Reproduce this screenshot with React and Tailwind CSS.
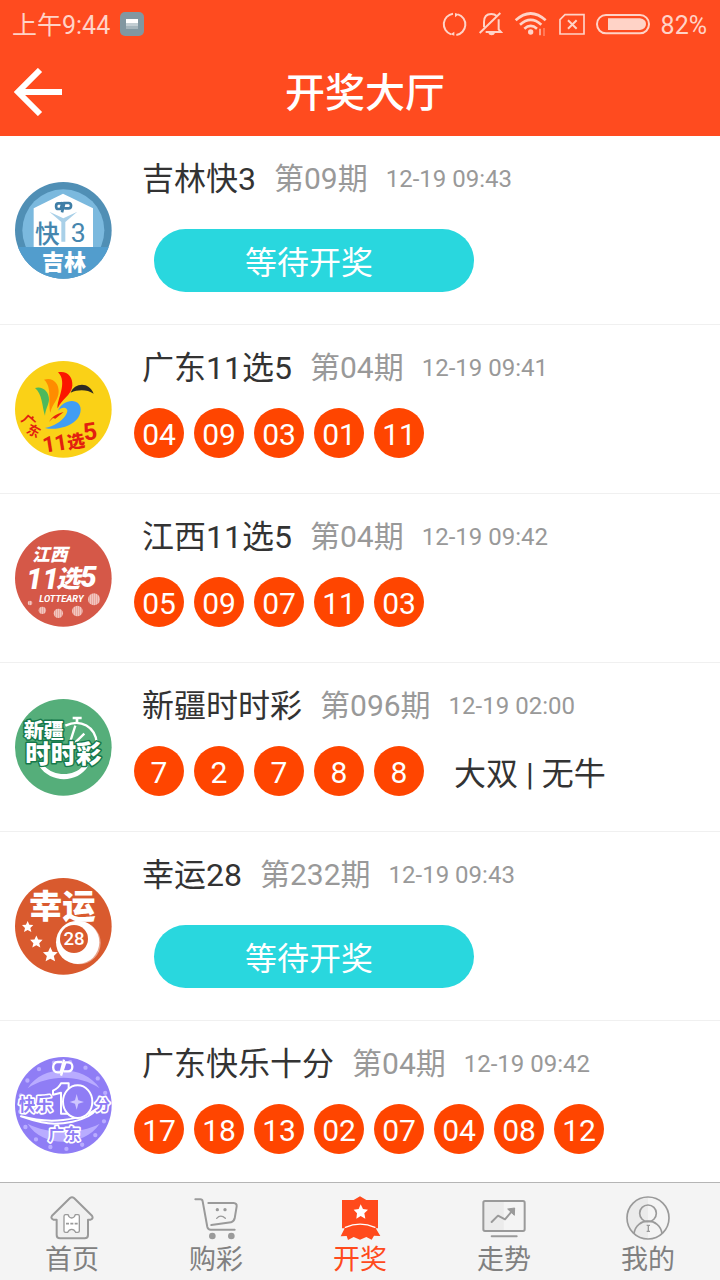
import React from "react";

const draws = [
  { id: "jlk3", name: "吉林快3", issue: "第09期", time: "12-19 09:43", Logo: JilinLogo },
  {
    id: "gd11x5",
    name: "广东11选5",
    issue: "第04期",
    time: "12-19 09:41",
    balls: ["04", "09", "03", "01", "11"],
    Logo: GuangdongLogo,
  },
  {
    id: "jx11x5",
    name: "江西11选5",
    issue: "第04期",
    time: "12-19 09:42",
    balls: ["05", "09", "07", "11", "03"],
    Logo: JiangxiLogo,
  },
  {
    id: "xjssc",
    name: "新疆时时彩",
    issue: "第096期",
    time: "12-19 02:00",
    balls: ["7", "2", "7", "8", "8"],
    note: "大双 | 无牛",
    Logo: XinjiangLogo,
  },
  { id: "xy28", name: "幸运28", issue: "第232期", time: "12-19 09:43", Logo: LuckyLogo },
  {
    id: "gdklsf",
    name: "广东快乐十分",
    issue: "第04期",
    time: "12-19 09:42",
    balls: ["17", "18", "13", "02", "07", "04", "08", "12"],
    Logo: HappyTenLogo,
  },
];

const tabs = [
  { label: "首页", Icon: HomeIcon },
  { label: "购彩", Icon: CartIcon },
  { label: "开奖", Icon: PrizeIcon, active: true },
  { label: "走势", Icon: TrendIcon },
  { label: "我的", Icon: UserIcon },
];

/* lottery logos */

function JilinLogo() {
  return (
    <svg viewBox="46 33 291 291" className="size-full" aria-hidden="true">
      <clipPath id="jilin-clip">
        <circle cx="191" cy="178" r="145" />
      </clipPath>
      <g clipPath="url(#jilin-clip)">
        <rect x="46" y="33" width="291" height="291" fill="#508fb5" />
        <circle cx="191" cy="178" r="123" fill="#7bb9de" />
        <path d="M190 68 280 112V228H102V112Z" fill="#fff" />
        <path d="M149 122 191 142 233 122 197 153V212H185V153Z" fill="#a9d0e8" />
        <rect x="46" y="228" width="291" height="96" fill="#529dcd" />
      </g>
      <g fill="none" stroke="#3f7ea6" strokeWidth="8">
        <path d="M186 97H176C167 97 167 114 176 114H183L189 93" />
        <path d="M187 124 194 96H207C217 96 216 112 207 112H194" />
      </g>
      <text x="143" y="216" fontSize="74" fontWeight="500" textAnchor="middle" fill="#4686ae">快</text>
      <text x="236" y="213" fontSize="80" textAnchor="middle" fill="#4686ae">3</text>
      <text x="193" y="298" fontSize="66" fontWeight="900" textAnchor="middle" fill="#fff">吉林</text>
    </svg>
  );
}

function GuangdongLogo() {
  return (
    <svg viewBox="46 32 291 291" className="size-full" aria-hidden="true">
      <circle cx="191" cy="177" r="145" fill="#fad117" />
      <path d="M106 113C128 106 149 124 148 148C147 164 137 176 136 196C127 168 128 130 106 113Z" fill="#4cb95c" />
      <path d="M133 88C158 79 178 98 177 124C176 149 158 160 152 187C145 156 158 108 133 88Z" fill="#ff8c00" />
      <path d="M175 66C203 60 220 80 218 106C216 134 184 147 174 174C170 150 206 96 175 66Z" fill="#fb1600" />
      <path d="M213 127C224 97 268 92 282 130C262 117 236 117 213 127Z" fill="#2e2a24" />
      <path
        d="M175 181C184 158 210 147 228 154C249 162 247 191 229 210C206 233 163 240 136 233C162 227 184 215 197 196C205 184 205 177 197 173C190 170 182 174 175 181Z"
        fill="#419df3"
      />
      <path d="M148 214C158 199 171 190 192 185L167 205L160 203Z" fill="#e6220c" />
      <g fill="#e2200f" fontWeight="700" textAnchor="middle">
        <text transform="translate(77 223) rotate(42)" fontSize="40">广</text>
        <text transform="translate(95 254) rotate(28)" fontSize="40">东</text>
        <text transform="translate(151 304) rotate(-9)" fontSize="66">1</text>
        <text transform="translate(187 299) rotate(-9)" fontSize="66">1</text>
        <text transform="translate(232 292) rotate(-9)" fontSize="53" fontWeight="900">选</text>
        <text transform="translate(275 268) rotate(-9)" fontSize="72">5</text>
      </g>
    </svg>
  );
}

function JiangxiLogo() {
  return (
    <svg viewBox="46 27 291 291" className="size-full" aria-hidden="true">
      <defs>
        <pattern id="jiangxi-stripes" width="6" height="6" patternUnits="userSpaceOnUse">
          <rect width="6" height="6" fill="#d55848" />
          <rect width="4" height="6" fill="#fbe6e2" />
        </pattern>
      </defs>
      <circle cx="191" cy="172" r="145" fill="#d55848" />
      <g fill="#fff" fontWeight="900" fontStyle="italic">
        <text x="97" y="119" fontSize="53">江西</text>
        <text x="80" y="204" fontSize="86">11</text>
        <text x="170" y="197" fontSize="72">选</text>
        <text x="242" y="197" fontSize="88">5</text>
        <text x="119" y="243" fontSize="28" fontWeight="700">LOTTEARY</text>
      </g>
      <g fill="url(#jiangxi-stripes)">
        <circle cx="91" cy="246" r="7" />
        <circle cx="128" cy="268" r="11" />
        <circle cx="176" cy="277" r="14" />
        <circle cx="233" cy="270" r="16" />
        <circle cx="283" cy="235" r="18" />
      </g>
    </svg>
  );
}

function XinjiangLogo() {
  return (
    <svg viewBox="46 27 291 291" className="size-full" aria-hidden="true">
      <circle cx="191" cy="172" r="145" fill="#55ae7a" />
      <g fill="none" stroke="#fff">
        <path d="M197 107C244 84 287 112 291 158" strokeWidth="7" />
        <path d="M219 84H246M232 84V98" strokeWidth="8" />
        <path d="M227 107 211 157M254 131 224 160" strokeWidth="7" />
      </g>
      <path d="M119 229H135C161 259 222 261 249 229H265C234 280 153 281 119 229Z" fill="#fff" />
      <g
        fill="#fff"
        stroke="#15784b"
        strokeWidth="9"
        strokeLinejoin="round"
        paintOrder="stroke"
        fontWeight="900"
        textAnchor="middle"
      >
        <text x="191" y="219" fontSize="76">时时彩</text>
        <text x="132" y="145" fontSize="60">新疆</text>
      </g>
    </svg>
  );
}

function LuckyLogo() {
  const star = "M0-17 5-6 17-5 8 4 11 16 0 10-11 16-8 4-17-5-5-6Z";
  return (
    <svg viewBox="46 39 291 291" className="size-full" aria-hidden="true">
      <circle cx="191" cy="184" r="145" fill="#d95a2e" />
      <circle cx="239" cy="234" r="64" fill="#e9a58d" />
      <circle cx="234" cy="232" r="65" fill="#fff" />
      <circle cx="223" cy="222" r="42" fill="#d95a2e" />
      <g fill="#fff">
        <path d={star} transform="translate(84 185)" />
        <path d={star} transform="translate(110 230) scale(1.1)" />
        <path d={star} transform="translate(152 268) scale(1.3)" />
      </g>
      <g fill="#fff" textAnchor="middle">
        <text x="188" y="158" fontSize="100" fontWeight="900">幸运</text>
        <text x="223" y="241" fontSize="56" fontWeight="500">28</text>
      </g>
    </svg>
  );
}

function HappyTenLogo() {
  return (
    <svg viewBox="46 38 291 291" className="size-full" aria-hidden="true">
      <circle cx="191" cy="183" r="145" fill="#8f7df5" />
      <circle cx="191" cy="183" r="131" fill="none" stroke="#b9acff" strokeWidth="13" strokeLinecap="round" strokeDasharray="0 49" />
      <path d="M84 132C128 60 252 60 300 132C238 90 146 90 84 132Z" fill="#b9acff" />
      <path d="M84 238C128 310 252 310 300 238C238 270 146 270 84 238Z" fill="#b9acff" />
      <g fill="none" stroke="#fff" strokeWidth="7">
        <path d="M187 53H174C156 53 156 84 174 84H183L193 46" />
        <path d="M184 94 197 54H206C222 54 222 81 206 81H192" />
      </g>
      <g fill="#8f7df5" stroke="#fff" strokeWidth="6" strokeLinejoin="round">
        <path d="M64 216C150 240 240 229 291 194C266 231 178 245 126 234C98 228 78 221 64 216Z" />
        <path d="M160 139C173 133 180 125 184 117H207V208H184V145L160 151Z" />
        <ellipse cx="234" cy="172" rx="44" ry="49" />
      </g>
      <path d="M231 149 236 168 253 173 236 178 231 196 226 178 210 173 226 168Z" fill="#cfc6ff" />
      <g
        fill="#8f7df5"
        stroke="#fff"
        strokeWidth="10"
        strokeLinejoin="round"
        paintOrder="stroke"
        fontWeight="700"
        textAnchor="middle"
      >
        <text x="82" y="200" fontSize="50">快</text>
        <text x="132" y="200" fontSize="54">乐</text>
        <text x="308" y="198" fontSize="46">分</text>
        <text x="194" y="286" fontSize="48">广东</text>
      </g>
    </svg>
  );
}

/* bottom tab icons */

function HomeIcon() {
  return (
    <svg viewBox="150 63 132 132" className="size-11" aria-hidden="true">
      <path
        d="M210 69Q216 65 222 69L276 122Q281 131 272 134H264V180Q264 190 254 190H180Q170 190 170 180V134H160Q151 130 156 122Z"
        fill="#f0f0f0"
        stroke="#9a9a9a"
        strokeWidth="6"
        strokeLinejoin="round"
      />
      <path
        d="M194 119H204Q207 129 215 129Q223 129 226 119H234Q238 119 238 124V168Q238 172 233 172H227Q223 163 215 163Q207 163 203 172H197Q192 172 192 168V124Q192 119 197 119Z"
        fill="#fff"
        stroke="#9a9a9a"
        strokeWidth="4"
      />
      <path d="M198 146H234" stroke="#9a9a9a" strokeWidth="5" strokeDasharray="9 4" />
    </svg>
  );
}

function CartIcon() {
  return (
    <svg viewBox="582 63 132 132" className="size-11" aria-hidden="true">
      <g fill="none" stroke="#9a9a9a" strokeWidth="6" strokeLinecap="round" strokeLinejoin="round">
        <path d="M586 73H601Q607 73 608 79L622 156Q624 164 632 164H704" />
        <path d="M625 84H701Q711 85 710 94L704 130Q702 139 693 142L634 150" />
        <path d="M650 130Q662 117 676 130" strokeWidth="4" />
      </g>
      <g fill="#9a9a9a">
        <circle cx="652" cy="104" r="5" />
        <circle cx="675" cy="104" r="5" />
        <circle cx="637" cy="183" r="10" />
        <circle cx="694" cy="183" r="10" />
      </g>
    </svg>
  );
}

function PrizeIcon() {
  return (
    <svg viewBox="54 63 132 132" className="size-11" aria-hidden="true">
      <path d="M66 75H101L120 64 139 75H174V160H66Z" fill="#ff4a1c" />
      <path d="M76 156Q120 138 165 156L181 183 162 182 155 194 139 186 120 194 101 186 84 195 80 183 62 184Z" fill="#ff4a1c" />
      <path d="M76 157Q120 138 165 157" fill="none" stroke="#fff" strokeWidth="4" strokeLinecap="round" />
      <path d="M122 88 129 102 144 104 133 115 136 131 122 123 109 131 111 115 101 104 116 102Z" fill="#fff" />
    </svg>
  );
}

function TrendIcon() {
  return (
    <svg viewBox="486 63 132 132" className="size-11" aria-hidden="true">
      <path d="M490 78H551V168H490Z" fill="#ebebeb" />
      <g fill="none" stroke="#9a9a9a" strokeWidth="6" strokeLinecap="round" strokeLinejoin="round">
        <rect x="490" y="78" width="124" height="90" rx="5" />
        <path d="M515 184H590" />
        <path d="M515 141 534 122 555 133 578 106" />
      </g>
      <path d="M563 102 584 99 583 121Z" fill="#9a9a9a" stroke="#9a9a9a" strokeWidth="3" />
    </svg>
  );
}

function UserIcon() {
  return (
    <svg viewBox="918 63 132 132" className="size-11" aria-hidden="true">
      <path d="M984 66A63 63 0 0 0 984 192Z" fill="#ebebeb" />
      <g fill="none" stroke="#9a9a9a" strokeWidth="5">
        <circle cx="984" cy="129" r="63" />
        <circle cx="984" cy="115" r="25" />
        <path d="M942 176C948 126 1020 126 1026 176" />
        <path d="M980 151H990M985 151V170M980 169H990" strokeWidth="4" />
      </g>
    </svg>
  );
}

function StatusBar() {
  return (
    <div className="flex h-12 items-center justify-between pl-3 pr-[13px] text-[25px] text-[#ffd3c7]">
      <div className="flex items-center gap-2.5">
        <span className="pt-1">上午9:44</span>
        <svg viewBox="0 0 24 24" className="size-6" aria-hidden="true">
          <rect width="24" height="24" rx="5" fill="#8197a1" />
          <rect x="6" y="7" width="12" height="4" fill="#fff" />
          <rect x="6" y="11" width="12" height="3" fill="#c3ced3" />
          <rect x="6" y="14" width="12" height="3" fill="#a6b6bd" />
        </svg>
      </div>
      <div className="flex items-center gap-[11px]">
        <svg viewBox="39 36 75 75" className="size-[25px]" fill="none" stroke="currentColor" strokeWidth="6" aria-hidden="true">
          <path d="M72 41A32 32 0 0 0 66 103M82 105A32 32 0 0 0 87 43" />
          <path d="M78 39V52L90 43ZM76 107V95L64 103Z" fill="currentColor" stroke="none" />
        </svg>
        <svg viewBox="147 36 75 75" className="size-[25px]" fill="none" stroke="currentColor" strokeWidth="6" aria-hidden="true">
          <path d="M165 82V66C165 50 174 42 187 42C194 42 199 44 203 48M209 58V88L216 96H170" />
          <path d="M152 99 214 39" />
          <path d="M178 99H198Q196 106 188 106Q180 106 178 99Z" fill="currentColor" stroke="none" />
        </svg>
        <svg viewBox="255 36 102 75" className="h-[25px] w-[34px]" fill="none" stroke="currentColor" strokeWidth="8" aria-hidden="true">
          <path d="M260 61Q305 20 350 61M273 74Q305 45 337 74M286 86Q305 69 324 86" />
          <circle cx="305" cy="96" r="8" fill="currentColor" stroke="none" />
          <path d="M333 86V106" strokeWidth="4" />
          <path d="M345 84V108" strokeWidth="4" opacity=".5" />
        </svg>
        <svg viewBox="390 36 78 75" className="h-[25px] w-[26px]" fill="none" stroke="currentColor" strokeWidth="5" aria-hidden="true">
          <path d="M408 44H465V102H393V59Z" />
          <path d="M417 61 443 86M443 61 417 86" strokeWidth="6" />
        </svg>
        <svg viewBox="504 36 162 75" className="h-[25px] w-[54px]" fill="none" stroke="currentColor" strokeWidth="6" aria-hidden="true">
          <rect x="507" y="45" width="156" height="55" rx="27" />
          <path d="M540 55H636Q654 58 654 72Q654 87 636 90H540Z" fill="currentColor" stroke="none" />
        </svg>
        <span className="pt-1">82%</span>
      </div>
    </div>
  );
}

function DrawRow({ draw }) {
  const { name, issue, time, balls, note, Logo } = draw;

  return (
    <li className="flex items-center border-b border-[#f0f0f0] pl-[15px]">
      <div className="size-[97px] shrink-0">
        <Logo />
      </div>
      <div className="min-w-0 flex-1 pl-[22px] pt-[22px]">
        <div className="flex items-center gap-[18px] whitespace-nowrap pl-2 leading-[42px]">
          <h2 className="text-[32px] text-[#333]">{name}</h2>
          <span className="text-[30px] text-[#999]">{issue}</span>
          <time className="text-[24px] text-[#999]">{time}</time>
        </div>

        {balls ? (
          <div className="flex items-center pb-[35px] pt-[19px]">
            <div className="flex gap-2.5">
              {balls.map((ball, i) => (
                <span
                  key={i}
                  className="flex size-[50px] items-center justify-center rounded-full bg-[#ff4500] pt-0.5 text-[30px] text-white"
                >
                  {ball}
                </span>
              ))}
            </div>
            {note && <span className="pl-[30px] pt-1.5 text-[32px] leading-[42px] text-[#333]">{note}</span>}
          </div>
        ) : (
          <div className="pb-8 pl-5 pt-[29px]">
            <button
              type="button"
              className="h-[63px] w-80 rounded-full bg-[#29d7de] pr-2.5 pt-1 text-[32px] text-white"
            >
              等待开奖
            </button>
          </div>
        )}
      </div>
    </li>
  );
}

function App() {
  return (
    <div className="flex h-screen flex-col bg-white font-['Roboto','Noto_Sans_CJK_SC',sans-serif]">
      <header className="bg-[#ff4b1f]">
        <StatusBar />
        <div className="grid h-22 grid-cols-[1fr_auto_1fr] items-center pl-2.5">
          <button type="button" aria-label="返回" className="ml-1 size-12 justify-self-start">
            <svg viewBox="0 0 48 48" fill="none" stroke="#fff" strokeWidth="6" aria-hidden="true">
              <path d="M26 2 4 24 26 46M3 24H48" />
            </svg>
          </button>
          <h1 className="pt-1 text-[40px] font-medium text-white">开奖大厅</h1>
        </div>
      </header>

      <main className="min-h-0 flex-1 overflow-y-auto [scrollbar-width:none]">
        <ul>
          {draws.map((draw) => (
            <DrawRow key={draw.id} draw={draw} />
          ))}
        </ul>
      </main>

      <nav className="grid grid-cols-5 border-t border-[#b5b5b5] bg-[#f4f4f4] pt-[13px]">
        {tabs.map(({ label, Icon, active }) => (
          <a
            key={label}
            href="#"
            aria-current={active ? "page" : undefined}
            className={`flex flex-col items-center text-[27px] leading-10 ${active ? "text-[#ff4a1c]" : "text-[#808080]"}`}
          >
            <Icon />
            {label}
          </a>
        ))}
      </nav>
    </div>
  );
}

export default App;
